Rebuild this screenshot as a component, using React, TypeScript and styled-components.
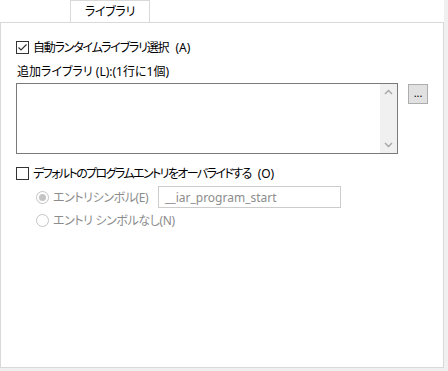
import styled, { createGlobalStyle } from "styled-components";

const GlobalStyle = createGlobalStyle`
  html, body {
    margin: 0;
    padding: 0;
    background: #f0f0f0;
  }
  body {
    font-family: "Noto Sans", "Noto Sans CJK JP", sans-serif;
    font-size: 12px;
    color: #000;
    font-feature-settings: "palt";
  }
`;

const Frame = styled.div`
  width: 444px;
  height: 368px;
  background: #fff;
  display: flex;
  flex-direction: column;
`;

const TabRow = styled.div`
  display: flex;
  padding-left: 70px;
  height: 22px;
`;

const Tab = styled.div`
  width: 80px;
  height: 22px;
  box-sizing: border-box;
  border: 1px solid #d9d9d9;
  border-bottom: none;
  background: #fff;
  display: flex;
  align-items: center;
  justify-content: center;
  margin-bottom: -1px;
  position: relative;
  z-index: 1;
  line-height: 1;
  padding-top: 1px;
  letter-spacing: -0.3px;
`;

const Panel = styled.div`
  flex: 1;
  border: 1px solid #d9d9d9;
  box-sizing: border-box;
  padding: 16px 15px 0 15px;
  display: flex;
  flex-direction: column;
`;

const CheckRow = styled.label<{ $top?: number }>`
  display: flex;
  align-items: center;
  gap: 4px;
  height: 16px;
  margin-top: ${(p) => p.$top ?? 0}px;
  white-space: nowrap;
`;

const Label = styled.span<{ $tight: number }>`
  letter-spacing: ${(p) => p.$tight}px;
`;

const Key = styled.span`
  letter-spacing: 0;
  margin-left: 3px;
`;

const Box = styled.span`
  width: 13px;
  height: 13px;
  flex-shrink: 0;
  box-sizing: border-box;
  border: 1px solid #333;
  background: #fff;
  display: flex;
  align-items: center;
  justify-content: center;
`;

const Caption = styled.div`
  margin-top: 8px;
  height: 16px;
  display: flex;
  align-items: center;
  padding-left: 1px;
`;

const ListRow = styled.div`
  display: flex;
  align-items: flex-start;
  gap: 10px;
  margin-top: 4px;
`;

const ListBox = styled.div`
  width: 385px;
  height: 71px;
  box-sizing: border-box;
  border: 1px solid #7a7a7a;
  background: #fff;
  display: flex;
  justify-content: flex-end;
`;

const ScrollTrack = styled.div`
  width: 17px;
  background: #f0f0f0;
  display: flex;
  flex-direction: column;
  justify-content: space-between;
  align-items: center;
  padding: 5px 0 5px;
`;

const BrowseButton = styled.button`
  width: 20px;
  height: 20px;
  margin-top: 1px;
  box-sizing: border-box;
  border: 1px solid #adadad;
  background: #e1e1e1;
  padding: 0 0 4px;
  font-family: "Noto Sans", sans-serif;
  font-size: 11px;
  line-height: 1;
  display: flex;
  align-items: center;
  justify-content: center;
  color: #000;
`;

const Options = styled.div`
  display: flex;
  flex-direction: column;
  padding-left: 20px;
  margin-top: 5px;
  color: #8c8c8c;
`;

const RadioRow = styled.div<{ $top?: number }>`
  display: flex;
  align-items: center;
  gap: 4px;
  min-height: 16px;
  margin-top: ${(p) => p.$top ?? 0}px;
  white-space: nowrap;
  letter-spacing: -0.4px;
`;

const Radio = styled.span<{ $on?: boolean }>`
  width: 13px;
  height: 13px;
  flex-shrink: 0;
  box-sizing: border-box;
  border-radius: 50%;
  border: 1px solid #c4c4c4;
  background: #fff;
  display: flex;
  align-items: center;
  justify-content: center;
  &::after {
    content: "";
    display: ${(p) => (p.$on ? "block" : "none")};
    width: 7px;
    height: 7px;
    border-radius: 50%;
    background: #c4c4c4;
  }
`;

const RadioLabel = styled.span`
  width: 101px;
`;

const SymbolInput = styled.div`
  width: 183px;
  height: 22px;
  box-sizing: border-box;
  border: 1px solid #cccccc;
  background: #fff;
  display: flex;
  align-items: center;
  padding-left: 6px;
  color: #8c8c8c;
  font-family: "Noto Sans", sans-serif;
  letter-spacing: 0;
`;

const Check = () => (
  <svg width="11" height="11" viewBox="0 0 11 11">
    <path d="M1.5 5.5 L4 8 L9.5 2.5" fill="none" stroke="#333" strokeWidth="1.2" />
  </svg>
);

const Chevron = ({ up }: { up?: boolean }) => (
  <svg width="9" height="6" viewBox="0 0 9 6">
    <path
      d={up ? "M1 5 L4.5 1.5 L8 5" : "M1 1 L4.5 4.5 L8 1"}
      fill="none"
      stroke="#a6a6a6"
      strokeWidth="1.4"
    />
  </svg>
);

export default function App() {
  return (
    <>
      <GlobalStyle />
      <Frame>
        <TabRow>
          <Tab>ライブラリ</Tab>
        </TabRow>
        <Panel>
          <CheckRow>
            <Box>
              <Check />
            </Box>
            <Label $tight={-1.2}>自動ランタイムライブラリ選択</Label>
            <Key>(A)</Key>
          </CheckRow>
          <Caption>追加ライブラリ (L):(1行に1個)</Caption>
          <ListRow>
            <ListBox>
              <ScrollTrack>
                <Chevron up />
                <Chevron />
              </ScrollTrack>
            </ListBox>
            <BrowseButton>...</BrowseButton>
          </ListRow>
          <CheckRow $top={11}>
            <Box />
            <Label $tight={-1.6}>デフォルトのプログラムエントリをオーバライドする</Label>
            <Key>(O)</Key>
          </CheckRow>
          <Options>
            <RadioRow>
              <Radio $on />
              <RadioLabel>エントリシンボル(E)</RadioLabel>
              <SymbolInput>__iar_program_start</SymbolInput>
            </RadioRow>
            <RadioRow $top={3}>
              <Radio />
              エントリ シンボルなし(N)
            </RadioRow>
          </Options>
        </Panel>
      </Frame>
    </>
  );
}
